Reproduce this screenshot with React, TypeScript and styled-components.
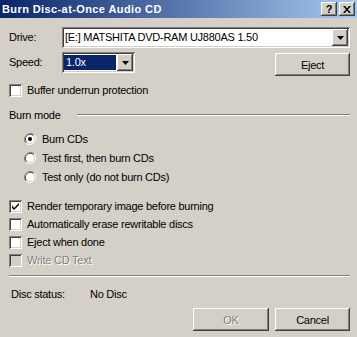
import React from 'react';
import styled, { createGlobalStyle } from 'styled-components';

const GlobalStyle = createGlobalStyle`
  html, body {
    margin: 0;
    padding: 0;
    background: #d4d0c8;
  }
`;

const raised = `
  box-shadow: inset -1px -1px #404040, inset 1px 1px #ffffff,
    inset -2px -2px #808080, inset 2px 2px #d4d0c8;
`;

const sunken = `
  box-shadow: inset 1px 1px #808080, inset -1px -1px #ffffff,
    inset 2px 2px #404040, inset -2px -2px #d4d0c8;
`;

const Window = styled.div`
  width: 357px;
  height: 337px;
  background: #d4d0c8;
  font-family: 'Liberation Sans', Arial, sans-serif;
  font-size: 11px;
  letter-spacing: -0.25px;
  color: #000;
  display: flex;
  flex-direction: column;
  overflow: hidden;
`;

const TitleBar = styled.div`
  height: 18px;
  background: linear-gradient(to right, #0a246a, #a6caf0);
  display: flex;
  align-items: center;
  padding: 0 2px 0 2px;
`;

const TitleText = styled.div`
  flex: 1;
  color: #fff;
  font-weight: bold;
  font-size: 11px;
  letter-spacing: 0.4px;
`;

const CaptionButton = styled.div<{ $gap?: number }>`
  width: 16px;
  height: 14px;
  background: #d4d0c8;
  ${raised}
  margin-left: ${(p) => p.$gap ?? 0}px;
  display: flex;
  align-items: center;
  justify-content: center;
  font-weight: bold;
  font-size: 11px;
  letter-spacing: 0;
`;

const Body = styled.div`
  flex: 1;
  display: flex;
  flex-direction: column;
  padding: 9px 7px 0 9px;
`;

const FieldRow = styled.div<{ $mt?: number }>`
  display: flex;
  align-items: flex-start;
  margin-top: ${(p) => p.$mt ?? 0}px;
`;

const FieldLabel = styled.div`
  width: 53px;
  height: 21px;
  line-height: 21px;
`;

const Combo = styled.div<{ $width?: number }>`
  ${(p) => (p.$width ? `width: ${p.$width}px;` : 'flex: 1;')}
  height: 21px;
  background: #fff;
  ${sunken}
  display: flex;
  align-items: stretch;
  padding: 2px;
  box-sizing: border-box;
`;

const ComboValue = styled.div<{ $selected?: boolean }>`
  flex: 1;
  padding-left: ${(p) => (p.$selected ? 2 : 1)}px;
  margin: 1px 1px 1px 0;
  line-height: 15px;
  background: ${(p) => (p.$selected ? '#0a246a' : 'transparent')};
  color: ${(p) => (p.$selected ? '#fff' : '#000')};
  white-space: nowrap;
  overflow: hidden;
`;

const DropButton = styled.div`
  width: 16px;
  background: #d4d0c8;
  ${raised}
  display: flex;
  align-items: center;
  justify-content: center;
`;

const PushButton = styled.div<{ $disabled?: boolean; $width: number; $mt?: number }>`
  width: ${(p) => p.$width}px;
  height: 23px;
  margin-top: ${(p) => p.$mt ?? 0}px;
  background: #d4d0c8;
  ${raised}
  display: flex;
  align-items: center;
  justify-content: center;
  color: ${(p) => (p.$disabled ? '#808080' : '#000')};
  text-shadow: ${(p) => (p.$disabled ? '1px 1px #fff' : 'none')};
`;

const Spacer = styled.div`
  flex: 1;
`;

const OptionRow = styled.div<{ $h: number; $indent?: number; $disabled?: boolean }>`
  display: flex;
  align-items: center;
  height: ${(p) => p.$h}px;
  padding-left: ${(p) => p.$indent ?? 0}px;
  color: ${(p) => (p.$disabled ? '#808080' : '#000')};
  text-shadow: ${(p) => (p.$disabled ? '1px 1px #fff' : 'none')};
`;

const Box = styled.div<{ $disabled?: boolean }>`
  width: 13px;
  height: 13px;
  box-sizing: border-box;
  background: ${(p) => (p.$disabled ? '#d4d0c8' : '#fff')};
  ${sunken}
  margin-right: 5px;
  display: flex;
  align-items: center;
  justify-content: center;
  flex-shrink: 0;
`;

const RadioWrap = styled.div`
  width: 12px;
  height: 12px;
  margin-right: 6px;
  flex-shrink: 0;
  display: flex;
`;

const GroupHeader = styled.div`
  display: flex;
  align-items: center;
  height: 18px;
  margin-top: 7px;
`;

const GroupLine = styled.div`
  flex: 1;
  height: 0;
  border-top: 1px solid #808080;
  border-bottom: 1px solid #fff;
  margin-left: 16px;
`;

const Group = styled.div<{ $mt: number }>`
  display: flex;
  flex-direction: column;
  margin-top: ${(p) => p.$mt}px;
`;

const Separator = styled.div`
  height: 0;
  border-top: 1px solid #808080;
  border-bottom: 1px solid #fff;
  margin-top: 6px;
`;

const StatusRow = styled.div`
  display: flex;
  margin-top: 10px;
  height: 14px;
  line-height: 14px;
  padding-left: 2px;
`;

const StatusLabel = styled.div`
  width: 79px;
`;

const ButtonRow = styled.div`
  display: flex;
  justify-content: flex-end;
  gap: 6px;
  margin-top: 7px;
`;

const Arrow = () => (
  <svg width="7" height="4" viewBox="0 0 7 4">
    <path d="M0 0h7L3.5 4z" fill="#000" />
  </svg>
);

const CheckMark = () => (
  <svg width="7" height="7" viewBox="0 0 7 7">
    <path d="M0 2v3l2 2 5-5V0L2 5z" fill="#000" />
  </svg>
);

const Radio: React.FC<{ checked?: boolean }> = ({ checked }) => (
  <RadioWrap>
    <svg width="12" height="12" viewBox="0 0 12 12">
      <path d="M10.2 1.8A6 6 0 0 0 1.8 10.2" stroke="#808080" strokeWidth="1" fill="none" />
      <path d="M9.5 2.5A5 5 0 0 0 2.5 9.5" stroke="#404040" strokeWidth="1" fill="none" />
      <path d="M1.8 10.2A6 6 0 0 0 10.2 1.8" stroke="#fff" strokeWidth="1" fill="none" />
      <path d="M2.5 9.5A5 5 0 0 0 9.5 2.5" stroke="#d4d0c8" strokeWidth="1" fill="none" />
      <circle cx="6" cy="6" r="4" fill="#fff" />
      {checked && <circle cx="6" cy="6" r="2" fill="#000" />}
    </svg>
  </RadioWrap>
);

const Check: React.FC<{ label: string; checked?: boolean; disabled?: boolean }> = ({
  label,
  checked,
  disabled,
}) => (
  <OptionRow $h={18} $disabled={disabled}>
    <Box $disabled={disabled}>{checked && <CheckMark />}</Box>
    {label}
  </OptionRow>
);

const App: React.FC = () => {
  return (
    <>
      <GlobalStyle />
      <Window>
        <TitleBar>
          <TitleText>Burn Disc-at-Once Audio CD</TitleText>
          <CaptionButton>?</CaptionButton>
          <CaptionButton $gap={2}>
            <svg width="8" height="7" viewBox="0 0 8 7">
              <path d="M0 0h2l2 2.5L6 0h2L5 3.5 8 7H6L4 4.5 2 7H0l3-3.5z" fill="#000" />
            </svg>
          </CaptionButton>
        </TitleBar>
        <Body>
          <FieldRow>
            <FieldLabel>Drive:</FieldLabel>
            <Combo>
              <ComboValue>[E:] MATSHITA DVD-RAM UJ880AS 1.50</ComboValue>
              <DropButton>
                <Arrow />
              </DropButton>
            </Combo>
          </FieldRow>
          <FieldRow $mt={4}>
            <FieldLabel>Speed:</FieldLabel>
            <Combo $width={73}>
              <ComboValue $selected>1.0x</ComboValue>
              <DropButton>
                <Arrow />
              </DropButton>
            </Combo>
            <Spacer />
            <PushButton $width={75} $mt={1}>
              Eject
            </PushButton>
          </FieldRow>
          <Group $mt={5}>
            <Check label="Buffer underrun protection" />
          </Group>
          <GroupHeader>
            Burn mode
            <GroupLine />
          </GroupHeader>
          <Group $mt={5}>
            <OptionRow $h={19} $indent={15}>
              <Radio checked />
              Burn CDs
            </OptionRow>
            <OptionRow $h={19} $indent={15}>
              <Radio />
              Test first, then burn CDs
            </OptionRow>
            <OptionRow $h={19} $indent={15}>
              <Radio />
              Test only (do not burn CDs)
            </OptionRow>
          </Group>
          <Group $mt={11}>
            <Check label="Render temporary image before burning" checked />
            <Check label="Automatically erase rewritable discs" />
            <Check label="Eject when done" />
            <Check label="Write CD Text" disabled />
          </Group>
          <Separator />
          <StatusRow>
            <StatusLabel>Disc status:</StatusLabel>
            No Disc
          </StatusRow>
          <ButtonRow>
            <PushButton $width={76} $disabled>
              OK
            </PushButton>
            <PushButton $width={75}>Cancel</PushButton>
          </ButtonRow>
        </Body>
      </Window>
    </>
  );
};

export default App;
